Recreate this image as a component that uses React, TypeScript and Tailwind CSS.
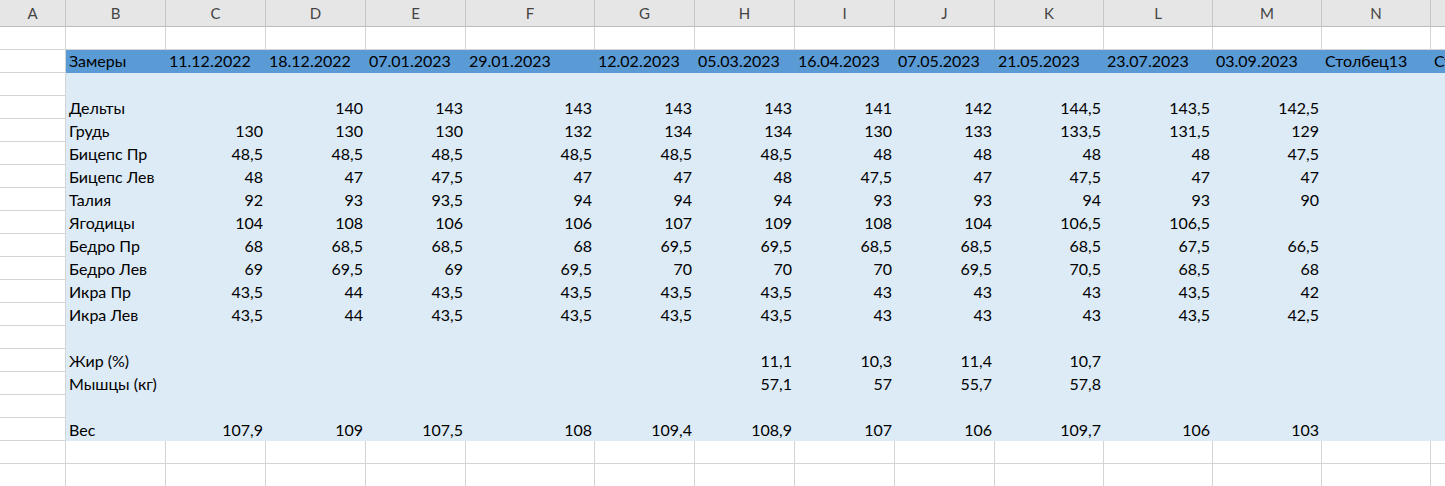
import React from "react";

const cols = ["A", "B", "C", "D", "E", "F", "G", "H", "I", "J", "K", "L", "M", "N", "O"];
const grid =
  "grid grid-cols-[66px_100px_100px_100px_100px_129px_100px_100px_100px_100px_109px_109px_109px_109px_109px]";
const inner =
  "col-span-14 grid grid-cols-[100px_100px_100px_100px_129px_100px_100px_100px_100px_109px_109px_109px_109px_109px] h-[23px]";

const dates = [
  "11.12.2022",
  "18.12.2022",
  "07.01.2023",
  "29.01.2023",
  "12.02.2023",
  "05.03.2023",
  "16.04.2023",
  "07.05.2023",
  "21.05.2023",
  "23.07.2023",
  "03.09.2023",
  "Столбец13",
  "Столбец14",
];

type Row = { label: string; values: string[] } | null;

const rows: Row[] = [
  null,
  { label: "Дельты", values: ["", "140", "143", "143", "143", "143", "141", "142", "144,5", "143,5", "142,5"] },
  { label: "Грудь", values: ["130", "130", "130", "132", "134", "134", "130", "133", "133,5", "131,5", "129"] },
  { label: "Бицепс Пр", values: ["48,5", "48,5", "48,5", "48,5", "48,5", "48,5", "48", "48", "48", "48", "47,5"] },
  { label: "Бицепс Лев", values: ["48", "47", "47,5", "47", "47", "48", "47,5", "47", "47,5", "47", "47"] },
  { label: "Талия", values: ["92", "93", "93,5", "94", "94", "94", "93", "93", "94", "93", "90"] },
  { label: "Ягодицы", values: ["104", "108", "106", "106", "107", "109", "108", "104", "106,5", "106,5", ""] },
  { label: "Бедро Пр", values: ["68", "68,5", "68,5", "68", "69,5", "69,5", "68,5", "68,5", "68,5", "67,5", "66,5"] },
  { label: "Бедро Лев", values: ["69", "69,5", "69", "69,5", "70", "70", "70", "69,5", "70,5", "68,5", "68"] },
  { label: "Икра Пр", values: ["43,5", "44", "43,5", "43,5", "43,5", "43,5", "43", "43", "43", "43,5", "42"] },
  { label: "Икра Лев", values: ["43,5", "44", "43,5", "43,5", "43,5", "43,5", "43", "43", "43", "43,5", "42,5"] },
  null,
  { label: "Жир (%)", values: ["", "", "", "", "", "11,1", "10,3", "11,4", "10,7", "", ""] },
  { label: "Мышцы (кг)", values: ["", "", "", "", "", "57,1", "57", "55,7", "57,8", "", ""] },
  null,
  { label: "Вес", values: ["107,9", "109", "107,5", "108", "109,4", "108,9", "107", "106", "109,7", "106", "103"] },
];

function ACell() {
  return <div className="h-[23px] border-r border-b border-[#d4d4d4]" />;
}

function EmptyRow() {
  return (
    <div className={grid}>
      {cols.map((c) => (
        <div key={c} className="h-[23px] border-r border-b border-[#d4d4d4]" />
      ))}
    </div>
  );
}

export default function App() {
  return (
    <div className="w-[1445px] h-[486px] overflow-hidden bg-white">
      <div className="w-[1540px] font-['Lato','Liberation_Sans',sans-serif] text-[16px] text-black">
        {/* column headers */}
        <div className={`${grid} bg-[#e6e6e6]`}>
          {cols.map((c) => (
            <div
              key={c}
              className="h-[27px] flex items-center justify-center border-r border-b border-r-[#c6c6c6] border-b-[#bdbdbd] text-[15px] text-[#444]"
            >
              {c}
            </div>
          ))}
        </div>

        <EmptyRow />

        {/* table header */}
        <div className={grid}>
          <ACell />
          <div className={`${inner} bg-[#5b9bd5]`}>
            <div className="flex items-center pl-[3px] pb-[2px] whitespace-nowrap overflow-hidden">Замеры</div>
            {dates.map((d, i) => (
              <div key={i} className="flex items-center pl-[3px] pb-[2px] whitespace-nowrap overflow-hidden">
                {d}
              </div>
            ))}
          </div>
        </div>

        {rows.map((r, ri) => (
          <div key={ri} className={grid}>
            <ACell />
            <div className={`${inner} bg-[#ddebf7]`}>
              <div className="flex items-center pl-[3px] pb-[2px] whitespace-nowrap">{r ? r.label : ""}</div>
              {Array.from({ length: 13 }).map((_, i) => (
                <div key={i} className="flex items-center justify-end pr-[3px] pb-[2px] whitespace-nowrap">
                  {r && i < r.values.length ? r.values[i] : ""}
                </div>
              ))}
            </div>
          </div>
        ))}

        <EmptyRow />
        <EmptyRow />
      </div>
    </div>
  );
}
